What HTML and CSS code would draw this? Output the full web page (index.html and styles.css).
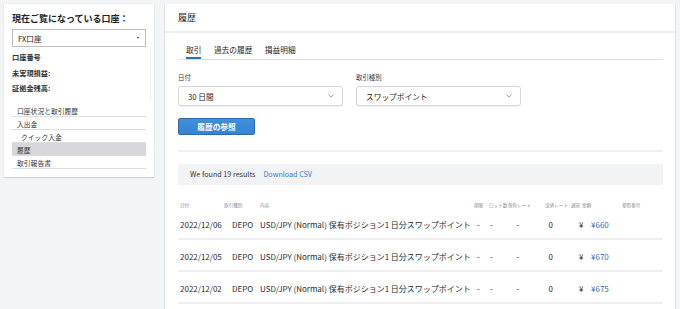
FILE: index.html
```html
<!DOCTYPE html>
<html lang="ja">
<head>
<meta charset="utf-8">
<title>履歴</title>
<link rel="stylesheet" href="styles.css">
</head>
<body>
<div class="page">
  <aside class="side">
    <div class="side-title">現在ご覧になっている口座：</div>
    <div class="acct-select"><span>FX口座</span><span class="caret"></span></div>
    <div class="info">
      <div class="info-row">口座番号</div>
      <div class="info-row">未実現損益:</div>
      <div class="info-row">証拠金残高:</div>
    </div>
    <ul class="menu">
      <li>口座状況と取引履歴</li>
      <li>入出金</li>
      <li class="sub">クイック入金</li>
      <li class="active">履歴</li>
      <li>取引報告書</li>
    </ul>
  </aside>
  <main class="panel">
    <div class="panel-head">履歴</div>
    <div class="panel-body">
      <nav class="tabs">
        <span class="tab active">取引</span>
        <span class="tab">過去の履歴</span>
        <span class="tab">損益明細</span>
      </nav>
      <div class="filters">
        <div class="field">
          <div class="label">日付</div>
          <div class="select"><span>30 日間</span><svg class="chev" width="6" height="4" viewBox="0 0 6 4"><polyline points="0.5,0.5 3,3 5.5,0.5" fill="none" stroke="#9a9a9a" stroke-width="0.9"/></svg></div>
        </div>
        <div class="field">
          <div class="label">取引種別</div>
          <div class="select"><span>スワップポイント</span><svg class="chev" width="6" height="4" viewBox="0 0 6 4"><polyline points="0.5,0.5 3,3 5.5,0.5" fill="none" stroke="#9a9a9a" stroke-width="0.9"/></svg></div>
        </div>
      </div>
      <button class="btn">履歴の参照</button>
      <div class="sep"></div>
      <div class="results"><span>We found 19 results</span><a class="csv">Download CSV</a></div>
      <div class="table">
        <div class="trow thead">
          <div><span>日付</span></div><div><span>取引種別</span></div><div><span>内容</span></div><div><span>期限</span></div><div><span>ロット数</span></div><div><span>保有レート</span></div><div><span>決済レート</span></div><div><span>通貨</span></div><div><span>金額</span></div><div><span>参照番号</span></div>
        </div>
        <div class="trow tbody">
          <div>2022/12/06</div><div>DEPO</div><div>USD/JPY (Normal) 保有ポジション1 日分スワップポイント</div><div>-</div><div>-</div><div>-</div><div>0</div><div>¥</div><div class="amt">¥660</div><div></div>
        </div>
        <div class="trow tbody">
          <div>2022/12/05</div><div>DEPO</div><div>USD/JPY (Normal) 保有ポジション1 日分スワップポイント</div><div>-</div><div>-</div><div>-</div><div>0</div><div>¥</div><div class="amt">¥670</div><div></div>
        </div>
        <div class="trow tbody">
          <div>2022/12/02</div><div>DEPO</div><div>USD/JPY (Normal) 保有ポジション1 日分スワップポイント</div><div>-</div><div>-</div><div>-</div><div>0</div><div>¥</div><div class="amt">¥675</div><div></div>
        </div>
      </div>
    </div>
  </main>
</div>
</body>
</html>
```
FILE: styles.css
```css
* { box-sizing: border-box; }
html, body { margin: 0; padding: 0; }
body {
  background: #f3f4f6;
  font-family: "Noto Sans CJK JP", "Noto Sans", sans-serif;
  color: #2b2b2b;
  width: 680px;
  height: 309px;
  overflow: hidden;
}
.page {
  display: flex;
  align-items: flex-start;
  padding: 4px 5px 0 4px;
  gap: 11px;
}
.side {
  width: 150px;
  flex: none;
  background: #fff;
  box-shadow: 0 1px 1px rgba(0,0,0,0.12), 0 0 0 0.5px rgba(0,0,0,0.04);
  padding: 9px 8px 8px 8px;
}
.side-title {
  font-size: 9px;
  line-height: 12px;
  font-weight: 700;
  color: #222;
  white-space: nowrap;
}
.acct-select {
  margin-top: 4px;
  height: 18px;
  border: 1px solid #bdbdbd;
  display: flex;
  align-items: center;
  justify-content: space-between;
  padding: 0 6px 0 5px;
  font-size: 7.6px;
  color: #222;
}
.caret {
  width: 0; height: 0;
  border-left: 1.5px solid transparent;
  border-right: 1.5px solid transparent;
  border-top: 2px solid #333;
}
.info {
  margin-right: -5px;
  padding: 3px 0 4px;
  border-right: 1px solid #efefef;
}
.info-row {
  font-size: 7.2px;
  line-height: 15.5px;
  font-weight: 700;
  color: #333;
}
.menu {
  list-style: none;
  margin: 3px 0 0;
  padding: 0;
}
.menu li {
  font-size: 6.8px;
  line-height: 10px;
  padding: 2px 0 0 5px;
  height: 13px;
  border-bottom: 1px solid #dedede;
  color: #333;
}
.menu li.sub { padding-left: 9px; }
.menu li.active { background: #d6d6db; }
.panel {
  flex: 1;
  background: #fff;
  height: 320px;
  box-shadow: -1px 0 0 #e4e5e8, 1px 0 0 #e4e5e8;
}
.panel-head {
  height: 29px;
  border-bottom: 2px solid #eceef0;
  font-size: 9px;
  line-height: 27px;
  padding-left: 13px;
  color: #222;
}
.panel-body {
  padding: 0 12px 0 13px;
}
.tabs {
  display: flex;
  gap: 12.5px;
  padding: 11px 0 0 8px;
  border-bottom: 1px solid #e0e0e0;
}
.tab {
  font-size: 7.7px;
  line-height: 12px;
  padding-bottom: 1px;
  border-bottom: 2px solid transparent;
  color: #222;
}
.tab.active { border-bottom-color: #1f74c6; }
.filters {
  display: flex;
  gap: 13px;
  margin-top: 13px;
}
.field { width: 165px; }
.label {
  font-size: 6.4px;
  line-height: 9px;
  color: #333;
}
.select {
  margin-top: 4px;
  height: 20px;
  border: 1px solid #d6d6d6;
  border-radius: 3px;
  box-shadow: 0 1px 1px rgba(0,0,0,0.06);
  display: flex;
  align-items: center;
  justify-content: space-between;
  padding: 0 8px 0 9px;
  font-size: 7.7px;
  color: #222;
}
.chev { display: block; }
.btn {
  display: block;
  margin-top: 12px;
  width: 77px;
  height: 17px;
  background: linear-gradient(#4190dc, #3683d2);
  border: 1px solid #2c6aa8;
  border-radius: 2px;
  color: #fff;
  font-family: inherit;
  font-size: 7.7px;
  font-weight: 700;
  padding: 0;
  line-height: 15px;
}
.sep {
  margin-top: 15px;
  height: 2px;
  background: #eeeff1;
}
.results {
  margin-top: 12px;
  height: 20.5px;
  background: #f2f3f5;
  display: flex;
  align-items: center;
  gap: 8px;
  padding-left: 12px;
  font-size: 7.2px;
  color: #333;
}
.csv { color: #2f7dc6; }
.trow {
  display: grid;
  grid-template-columns: 44px 36px 214px 15px 19px 37px 26px 11px 40px 43px;
  white-space: nowrap;
}
.thead {
  padding-top: 13px;
  height: 23px;
  line-height: 9px;
  color: #8a8a8a;
}
.thead > div { padding-left: 1.5px; }
.thead span {
  display: inline-block;
  font-size: 10px;
  transform: scale(0.46);
  transform-origin: 0 50%;
}
.tbody {
  height: 32px;
  padding-top: 3px;
  line-height: 27px;
  font-size: 8px;
  color: #2b2b2b;
  border-bottom: 2px solid #eceef0;
}
.tbody > div:nth-child(1) { padding-left: 2px; }
.tbody > div:nth-child(2) { padding-left: 10px; }
.tbody > div:nth-child(3) { padding-left: 2px; }
.tbody > div:nth-child(4) { padding-left: 5px; }
.tbody > div:nth-child(5) { padding-left: 3px; }
.tbody > div:nth-child(6) { padding-left: 10.5px; }
.tbody > div:nth-child(7) { padding-left: 5.5px; }
.tbody > div:nth-child(8) { padding-left: 10px; }
.tbody > div:nth-child(9) { padding-left: 11px; }
.amt { color: #2f6fb5; }
```
